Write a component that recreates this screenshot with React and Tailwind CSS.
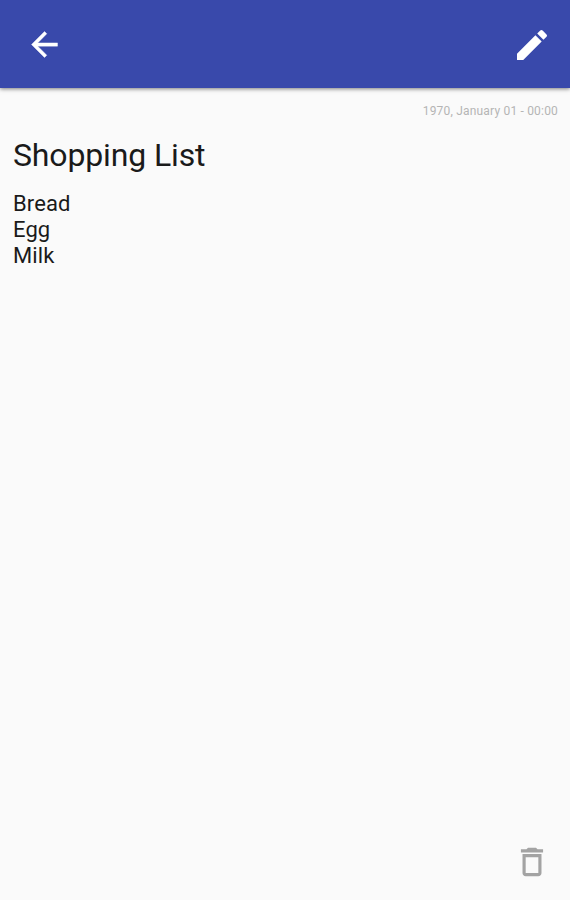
export default function App() {
  return (
    <div className="flex h-[900px] w-[570px] flex-col overflow-hidden bg-[#fafafa] font-['Roboto',sans-serif] text-[#1a1a1a]">
      <header className="z-10 flex h-[88px] shrink-0 items-center justify-between bg-[#3949ab] pl-[25px] pr-[18px] pt-px text-white shadow-[0_1px_4px_rgba(0,0,0,0.5)]">
        <button aria-label="Back">
          <svg className="size-[39px]" viewBox="0 0 24 24" fill="currentColor" stroke="currentColor" strokeWidth="0.25">
            <path d="M20 11H7.83l5.59-5.59L12 4l-8 8 8 8 1.41-1.41L7.83 13H20v-2z" />
          </svg>
        </button>
        <button aria-label="Edit">
          <svg className="size-10" viewBox="0 0 24 24" fill="currentColor">
            <path d="M3 17.25V21h3.75L17.81 9.94l-3.75-3.75L3 17.25zM20.71 7.04a1 1 0 0 0 0-1.41l-2.34-2.34a1 1 0 0 0-1.41 0l-1.83 1.83 3.75 3.75 1.83-1.83z" />
          </svg>
        </button>
      </header>
      <main className="flex flex-1 flex-col pl-[13px] pr-3">
        <time className="mt-[15px] self-end text-[12px] leading-4 tracking-[0.19px] text-[#b5b5b5]">1970, January 01 - 00:00</time>
        <h1 className="mt-4 text-[32px] leading-10 tracking-[-0.14px]">Shopping List</h1>
        <div className="mt-4 text-[22px] leading-[26px] tracking-[0.1px]">
          <p>Bread</p>
          <p>Egg</p>
          <p>Milk</p>
        </div>
      </main>
      <footer className="flex justify-end pb-[19px] pr-[19px] text-[#a3a3a3]">
        <button aria-label="Delete">
          <svg className="size-[38px]" viewBox="0 0 24 24" fill="currentColor">
            <path d="M6 19c0 1.1.9 2 2 2h8c1.1 0 2-.9 2-2V7H6v12zM8 9h8v10H8V9zm7.5-5l-1-1h-5l-1 1H5v2h14V4h-3.5z" />
          </svg>
        </button>
      </footer>
    </div>
  );
}
